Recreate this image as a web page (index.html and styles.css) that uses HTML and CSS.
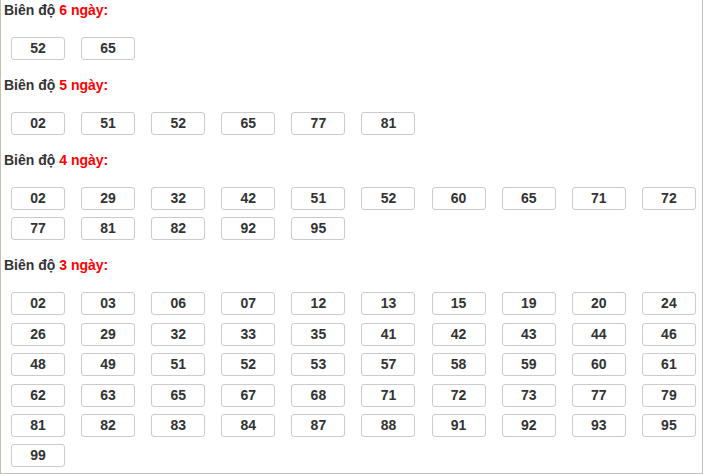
FILE: index.html
```html
<!DOCTYPE html>
<html lang="vi">
<head>
<meta charset="utf-8">
<title>Biên độ</title>
<link rel="stylesheet" href="styles.css">
</head>
<body>
<div class="wrap">
  <section class="group">
    <h3 class="title">Biên độ <span class="hl">6 ngày:</span></h3>
    <div class="grid">
      <div class="cell"><span class="num">52</span></div>
      <div class="cell"><span class="num">65</span></div>
    </div>
  </section>
  <section class="group">
    <h3 class="title">Biên độ <span class="hl">5 ngày:</span></h3>
    <div class="grid">
      <div class="cell"><span class="num">02</span></div>
      <div class="cell"><span class="num">51</span></div>
      <div class="cell"><span class="num">52</span></div>
      <div class="cell"><span class="num">65</span></div>
      <div class="cell"><span class="num">77</span></div>
      <div class="cell"><span class="num">81</span></div>
    </div>
  </section>
  <section class="group">
    <h3 class="title">Biên độ <span class="hl">4 ngày:</span></h3>
    <div class="grid">
      <div class="cell"><span class="num">02</span></div>
      <div class="cell"><span class="num">29</span></div>
      <div class="cell"><span class="num">32</span></div>
      <div class="cell"><span class="num">42</span></div>
      <div class="cell"><span class="num">51</span></div>
      <div class="cell"><span class="num">52</span></div>
      <div class="cell"><span class="num">60</span></div>
      <div class="cell"><span class="num">65</span></div>
      <div class="cell"><span class="num">71</span></div>
      <div class="cell"><span class="num">72</span></div>
      <div class="cell"><span class="num">77</span></div>
      <div class="cell"><span class="num">81</span></div>
      <div class="cell"><span class="num">82</span></div>
      <div class="cell"><span class="num">92</span></div>
      <div class="cell"><span class="num">95</span></div>
    </div>
  </section>
  <section class="group">
    <h3 class="title">Biên độ <span class="hl">3 ngày:</span></h3>
    <div class="grid">
      <div class="cell"><span class="num">02</span></div>
      <div class="cell"><span class="num">03</span></div>
      <div class="cell"><span class="num">06</span></div>
      <div class="cell"><span class="num">07</span></div>
      <div class="cell"><span class="num">12</span></div>
      <div class="cell"><span class="num">13</span></div>
      <div class="cell"><span class="num">15</span></div>
      <div class="cell"><span class="num">19</span></div>
      <div class="cell"><span class="num">20</span></div>
      <div class="cell"><span class="num">24</span></div>
      <div class="cell"><span class="num">26</span></div>
      <div class="cell"><span class="num">29</span></div>
      <div class="cell"><span class="num">32</span></div>
      <div class="cell"><span class="num">33</span></div>
      <div class="cell"><span class="num">35</span></div>
      <div class="cell"><span class="num">41</span></div>
      <div class="cell"><span class="num">42</span></div>
      <div class="cell"><span class="num">43</span></div>
      <div class="cell"><span class="num">44</span></div>
      <div class="cell"><span class="num">46</span></div>
      <div class="cell"><span class="num">48</span></div>
      <div class="cell"><span class="num">49</span></div>
      <div class="cell"><span class="num">51</span></div>
      <div class="cell"><span class="num">52</span></div>
      <div class="cell"><span class="num">53</span></div>
      <div class="cell"><span class="num">57</span></div>
      <div class="cell"><span class="num">58</span></div>
      <div class="cell"><span class="num">59</span></div>
      <div class="cell"><span class="num">60</span></div>
      <div class="cell"><span class="num">61</span></div>
      <div class="cell"><span class="num">62</span></div>
      <div class="cell"><span class="num">63</span></div>
      <div class="cell"><span class="num">65</span></div>
      <div class="cell"><span class="num">67</span></div>
      <div class="cell"><span class="num">68</span></div>
      <div class="cell"><span class="num">71</span></div>
      <div class="cell"><span class="num">72</span></div>
      <div class="cell"><span class="num">73</span></div>
      <div class="cell"><span class="num">77</span></div>
      <div class="cell"><span class="num">79</span></div>
      <div class="cell"><span class="num">81</span></div>
      <div class="cell"><span class="num">82</span></div>
      <div class="cell"><span class="num">83</span></div>
      <div class="cell"><span class="num">84</span></div>
      <div class="cell"><span class="num">87</span></div>
      <div class="cell"><span class="num">88</span></div>
      <div class="cell"><span class="num">91</span></div>
      <div class="cell"><span class="num">92</span></div>
      <div class="cell"><span class="num">93</span></div>
      <div class="cell"><span class="num">95</span></div>
      <div class="cell"><span class="num">99</span></div>
    </div>
  </section>
</div>
</body>
</html>
```
FILE: styles.css
```css
html, body {
  margin: 0;
  padding: 0;
  background: #fff;
}
body {
  font-family: "Liberation Sans", Arial, sans-serif;
  color: #333;
}
.wrap {
  width: 703px;
  box-sizing: border-box;
  border: 1px solid #c6bdb3;
  border-top: none;
  padding-bottom: 6px;
}
.group {
  padding-bottom: 15px;
}
.group:last-child {
  padding-bottom: 0;
}
.title {
  margin: 0 0 19px 0;
  padding: 2px 0 0 3px;
  font-size: 14px;
  line-height: 16px;
  font-weight: bold;
  color: #333;
}
.hl {
  color: #f00;
}
.grid {
  display: grid;
  grid-template-columns: repeat(10, 1fr);
  row-gap: 7.4px;
}
.cell {
  padding-left: 10px;
}
.num {
  display: block;
  box-sizing: border-box;
  width: 54px;
  height: 23px;
  border: 1px solid #cbcbcb;
  border-radius: 3px;
  text-align: center;
  font-size: 14px;
  line-height: 21px;
  font-weight: bold;
  color: #333;
}
```
